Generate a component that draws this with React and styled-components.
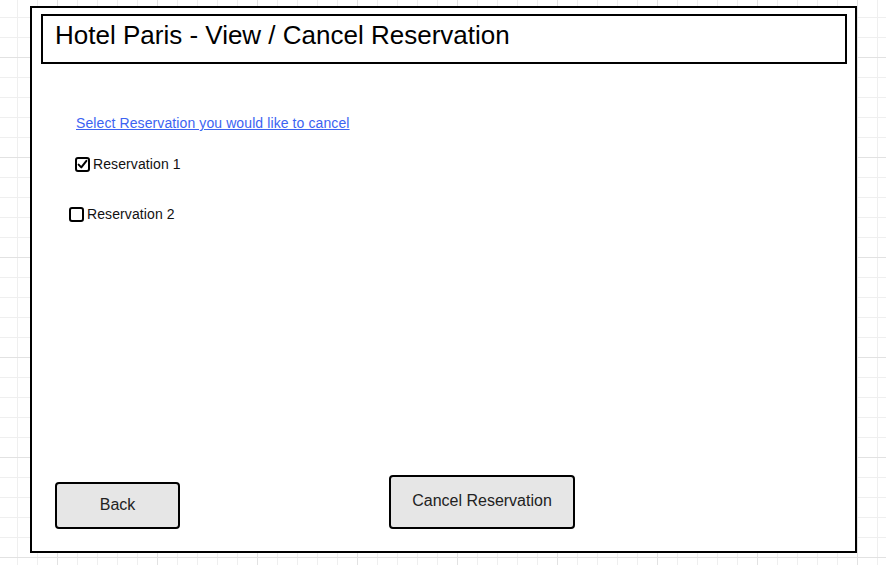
import styled, { createGlobalStyle } from "styled-components";

const GlobalStyle = createGlobalStyle`
html, body {
    margin: 0;
    padding: 0;
}
body {
    width: 886px;
    height: 565px;
    overflow: hidden;
    font-family: "Liberation Sans", Arial, sans-serif;
    background-color: #ffffff;
    background-image:
        linear-gradient(to right, #e2e2e2 1px, transparent 1px),
        linear-gradient(to bottom, #e2e2e2 1px, transparent 1px),
        linear-gradient(to right, #efefef 1px, transparent 1px),
        linear-gradient(to bottom, #efefef 1px, transparent 1px);
    background-size: 100px 100px, 100px 100px, 20px 20px, 20px 20px;
    background-position: 57px 57px, 57px 57px, 17px 17px, 17px 17px;
}
`;

function CheckIcon() {
    return (
        <svg width="11" height="11" viewBox="0 0 11 11">
            <path d="M1.6 5.6 L4.3 8.4 L9.4 1.8" fill="none" stroke="#000" strokeWidth="2" strokeLinecap="round" strokeLinejoin="round" />
        </svg>
    );
}

function Reservation({ label, checked, indent, top }) {
    return (
        <Row indent={indent} top={top}>
            <Box>{checked && <CheckIcon />}</Box>
            <Label>{label}</Label>
        </Row>
    );
}

export default function App() {
    return (
        <>
            <GlobalStyle />
            <Frame>
                <TitleBar>Hotel Paris - View / Cancel Reservation</TitleBar>
                <Content>
                    <Prompt href="#">Select Reservation you would like to cancel</Prompt>
                    <Reservation label="Reservation 1" checked indent={43} top={25} />
                    <Reservation label="Reservation 2" indent={37} top={34} />
                </Content>
                <Footer>
                    <Button width={125} height={47}>Back</Button>
                    <Button width={186} height={54} gap={209}>Cancel Reservation</Button>
                </Footer>
            </Frame>
        </>
    );
}

const Frame = styled.div`
    box-sizing: border-box;
    margin: 6px 0 0 30px;
    width: 827px;
    height: 547px;
    border: 2px solid #000;
    background: #fff;
    display: flex;
    flex-direction: column;
`;

const TitleBar = styled.div`
    box-sizing: border-box;
    margin: 6px 8px 0 9px;
    height: 50px;
    border: 2px solid #000;
    padding: 4px 0 0 12px;
    font-size: 26px;
    line-height: 30px;
    color: #000;
`;

const Content = styled.div`
    flex: 1;
    display: flex;
    flex-direction: column;
    align-items: flex-start;
    padding: 51px 0 0 44px;
`;

const Prompt = styled.a`
    font-size: 14px;
    line-height: 16px;
    letter-spacing: 0.1px;
    color: #3c63f2;
    text-decoration: underline;
`;

const Row = styled.div`
    display: flex;
    align-items: center;
    gap: 3px;
    height: 16px;
    margin-top: ${p => p.top}px;
    margin-left: ${p => p.indent - 44}px;
`;

const Box = styled.span`
    box-sizing: border-box;
    width: 15px;
    height: 15px;
    border: 2px solid #000;
    border-radius: 3px;
    background: #fff;
    display: flex;
    align-items: center;
    justify-content: center;
`;

const Label = styled.span`
    font-size: 14px;
    line-height: 16px;
    letter-spacing: 0.1px;
    color: #111;
`;

const Footer = styled.div`
    display: flex;
    align-items: flex-end;
    padding: 0 0 22px 23px;
`;

const Button = styled.button`
    box-sizing: border-box;
    width: ${p => p.width}px;
    height: ${p => p.height}px;
    margin-left: ${p => p.gap || 0}px;
    border: 2px solid #000;
    border-radius: 4px;
    background: #e6e6e6;
    font-family: "Liberation Sans", Arial, sans-serif;
    font-size: 16px;
    color: #222;
    padding: 0 0 2px;
    display: flex;
    align-items: center;
    justify-content: center;
`;
